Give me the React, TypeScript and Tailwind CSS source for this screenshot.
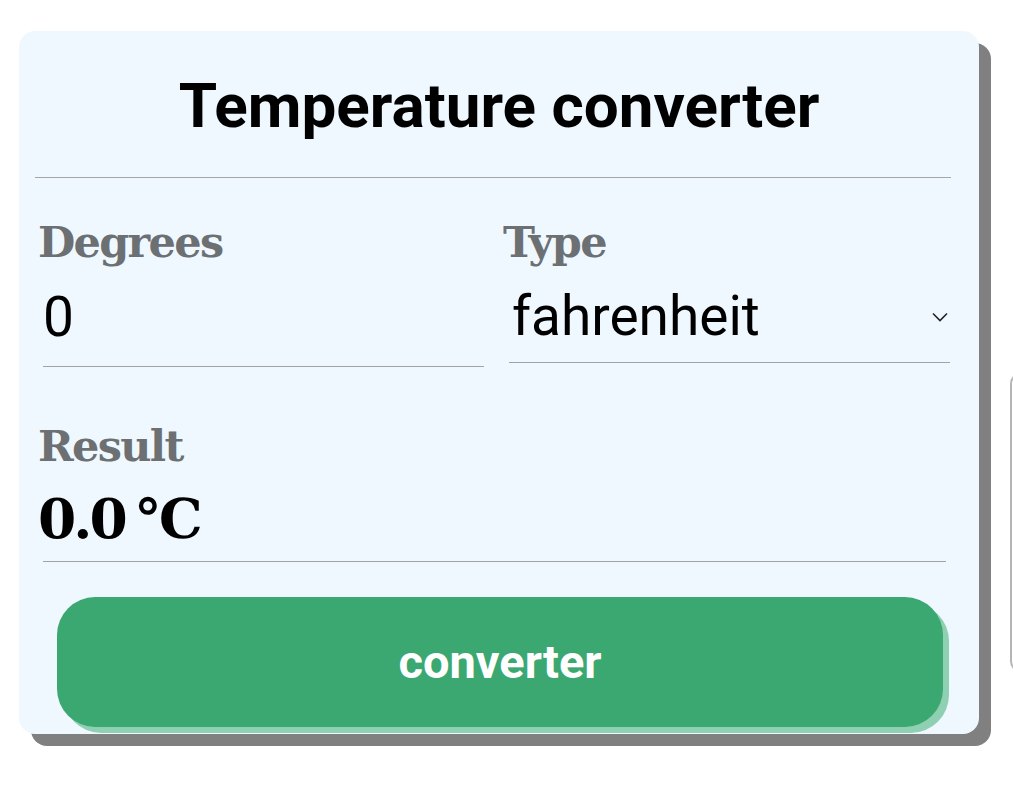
import React from "react";

export default function App() {
  return (
    <div className="w-[1013px] h-[785px] overflow-hidden bg-white flex items-start pt-[31px]">
      <div className="shrink-0 ml-[19px] w-[960px] rounded-[16px] bg-[#f0f8ff] shadow-[12px_12px_0_0_#808080] pt-[38px] pb-[7px]">
        <h1 className="text-center text-[62px] leading-[73px] font-bold text-black font-['Roboto',sans-serif]">
          Temperature converter
        </h1>
        <div className="mt-[35px] ml-[16px] mr-[28px] h-[1px] bg-[#a6a6a6]" />

        <div className="mt-[40px] ml-[19px] flex">
          <div className="w-[465px] shrink-0">
            <div className="text-[43px] leading-[48px] tracking-[-1.7px] font-bold text-[#6c7073] font-['DejaVu_Serif',serif]">
              Degrees
            </div>
            <div className="mt-[19px] ml-[5px] w-[441px] h-[82px] pb-[17px] border-b border-[#a3a3a3] text-[55px] leading-[64px] text-black font-['Roboto',sans-serif]">
              0
            </div>
          </div>
          <div className="w-[447px] shrink-0">
            <div className="text-[43px] leading-[48px] tracking-[-1.7px] font-bold text-[#6c7073] font-['DejaVu_Serif',serif]">
              Type
            </div>
            <div className="mt-[18px] ml-[6px] w-[441px] h-[79px] pb-[14px] border-b border-[#a3a3a3] flex items-start justify-between">
              <span className="pl-[3px] text-[55px] leading-[64px] text-black font-['Roboto',sans-serif]">
                fahrenheit
              </span>
              <svg
                width="16"
                height="10"
                viewBox="0 0 16 10"
                className="mt-[28px] mr-[2px]"
                fill="none"
                stroke="#222"
                strokeWidth="1.6"
              >
                <polyline points="1,1.5 8,8.5 15,1.5" />
              </svg>
            </div>
          </div>
        </div>

        <div className="mt-[55px] ml-[19px]">
          <div className="text-[43px] leading-[48px] tracking-[-1.7px] font-bold text-[#6c7073] font-['DejaVu_Serif',serif]">
            Result
          </div>
          <div className="mt-[19px] ml-[5px] mr-[33px] h-[73px] pb-[12px] border-b border-[#a3a3a3] text-[55px] leading-[60px] tracking-[-3px] [word-spacing:-4px] font-bold text-black font-['DejaVu_Serif',serif]">
            <span className="-ml-[5px]">0.0 ℃</span>
          </div>
        </div>

        <div className="mt-[35px] ml-[38px] w-[886px] h-[130px] rounded-[38px] bg-[#3ba872] shadow-[6px_6px_0_0_#8fcfb2] flex items-center justify-center">
          <span className="text-[47px] leading-[56px] font-bold text-white font-['Roboto',sans-serif]">
            converter
          </span>
        </div>
      </div>

      <div className="shrink-0 ml-[31px] mt-[341px] w-[300px] h-[301px] rounded-[12px] border-2 border-[#b5b5b5] bg-white" />
    </div>
  );
}
